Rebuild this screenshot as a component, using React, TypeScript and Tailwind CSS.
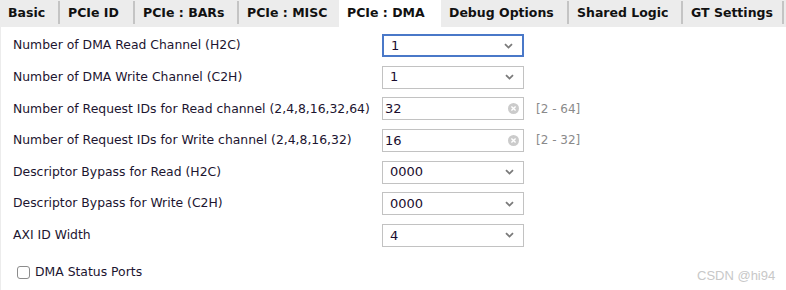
import React from 'react';

const tabs = [
  { label: 'Basic', w: 'w-[58px]' },
  { label: 'PCIe ID', w: 'w-[73px]' },
  { label: 'PCIe : BARs', w: 'w-[102px]' },
  { label: 'PCIe : MISC', w: 'w-[100px]' },
  { label: 'PCIe : DMA', w: 'w-[102px]', active: true },
  { label: 'Debug Options', w: 'w-[126px]' },
  { label: 'Shared Logic', w: 'w-[112px]' },
  { label: 'GT Settings', w: 'w-[99px]' },
];

const rows = [
  { label: 'Number of DMA Read Channel (H2C)', kind: 'select', value: '1', focused: true },
  { label: 'Number of DMA Write Channel (C2H)', kind: 'select', value: '1' },
  { label: 'Number of Request IDs for Read channel (2,4,8,16,32,64)', kind: 'text', value: '32', range: '[2 - 64]' },
  { label: 'Number of Request IDs for Write channel (2,4,8,16,32)', kind: 'text', value: '16', range: '[2 - 32]' },
  { label: 'Descriptor Bypass for Read (H2C)', kind: 'select', value: '0000' },
  { label: 'Descriptor Bypass for Write (C2H)', kind: 'select', value: '0000' },
  { label: 'AXI ID Width', kind: 'select', value: '4' },
];

function Chevron() {
  return (
    <svg width="9" height="6" viewBox="0 0 9 6" className="shrink-0">
      <polyline points="1,1.2 4.5,4.6 8,1.2" fill="none" stroke="#7a7a7a" strokeWidth="1.8" />
    </svg>
  );
}

function ClearIcon() {
  return (
    <svg width="11" height="11" viewBox="0 0 11 11" className="shrink-0">
      <circle cx="5.5" cy="5.5" r="5.5" fill="#cbcbcb" />
      <path d="M3.4 3.4 L7.6 7.6 M7.6 3.4 L3.4 7.6" stroke="#fff" strokeWidth="1.4" />
    </svg>
  );
}

export default function App() {
  return (
    <div className="relative w-[786px] h-[290px] bg-white overflow-hidden font-['DejaVu_Sans',sans-serif]">
      {/* Tab bar */}
      <div className="flex h-[27px] bg-[#ececec]">
        {tabs.map((t, i) => (
          <div key={i} className="flex">
            <div
              className={`${t.w} h-[27px] flex items-center pl-[8px] text-[12.5px] font-bold text-[#111] ${
                t.active ? 'bg-white' : ''
              }`}
            >
              {t.label}
            </div>
            {!t.active && tabs[i + 1] && !tabs[i + 1].active && (
              <div className="w-[2px] h-[23px] mt-[1px] bg-[#c4c4c4]" />
            )}
          </div>
        ))}
        <div className="w-[2px] h-[23px] mt-[1px] bg-[#c4c4c4]" />
      </div>

      {/* Form */}
      <div className="border-l border-[#ececec] h-[263px] pt-[7px]">
        <div className="flex flex-col gap-[8.67px]">
          {rows.map((r, i) => (
            <div key={i} className="flex items-center h-[23px]">
              <div className="w-[381px] pl-[12px] text-[12.4px] text-[#1c1530] whitespace-nowrap">{r.label}</div>
              {r.kind === 'select' ? (
                <div
                  className={`w-[142px] h-[23px] flex items-center justify-between pl-[7px] pr-[9px] text-[13px] text-[#1a0d2e] ${
                    r.focused ? 'border-2 border-[#4a78c8] pl-[6px] pr-[8px]' : 'border border-[#c2c2c2]'
                  }`}
                >
                  <span>{r.value}</span>
                  <Chevron />
                </div>
              ) : (
                <>
                  <div className="w-[142px] h-[23px] flex items-center justify-between pl-[2px] pr-[4px] border border-[#c2c2c2] text-[13px] text-[#1a0d2e]">
                    <span>{r.value}</span>
                    <ClearIcon />
                  </div>
                  <span className="ml-[12px] text-[12px] text-[#8a8a8a]">{r.range}</span>
                </>
              )}
            </div>
          ))}
        </div>

        <div className="flex items-center mt-[16px] pl-[16px]">
          <div className="w-[13px] h-[13px] border border-[#8c8c8c] rounded-[3px] bg-white" />
          <span className="ml-[5px] text-[12.4px] text-[#1c1530]">DMA Status Ports</span>
        </div>
      </div>

      {/* watermark */}
      <div className="absolute left-[697px] top-[266px] text-[13px] text-[#c8c8c8] font-['Liberation_Sans',sans-serif]">
        CSDN @hi94
      </div>
    </div>
  );
}
